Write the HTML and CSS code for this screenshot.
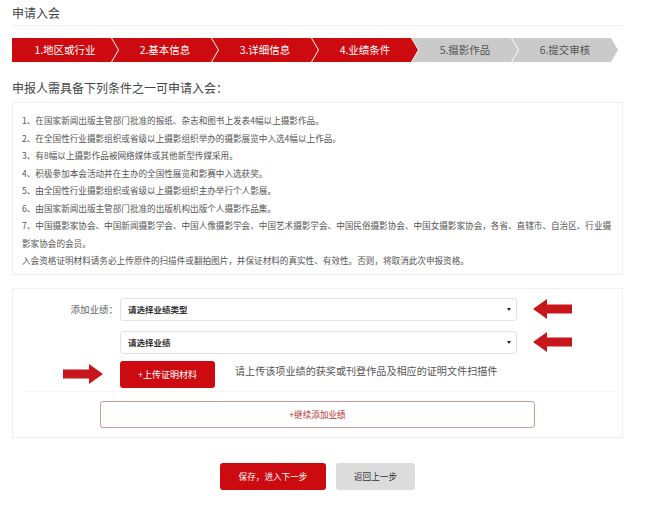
FILE: index.html
```html
<!DOCTYPE html>
<html lang="zh-CN">
<head>
  <meta charset="UTF-8">
  <meta name="viewport" content="width=device-width, initial-scale=1.0">
  <title>申请入会</title>
  <link rel="stylesheet" href="styles.css">
</head>
<body>
  <div class="page">
    <div class="page-title">申请入会</div>

    <!-- Step bar -->
    <div class="steps">
      <div class="step done">1.地区或行业</div>
      <div class="step done">2.基本信息</div>
      <div class="step done">3.详细信息</div>
      <div class="step done">4.业绩条件</div>
      <div class="step">5.摄影作品</div>
      <div class="step">6.提交审核</div>
    </div>

    <h2 class="cond-title">申报人需具备下列条件之一可申请入会：</h2>

    <!-- Conditions -->
    <div class="cond-box">
      <p>1、在国家新闻出版主管部门批准的报纸、杂志和图书上发表4幅以上摄影作品。</p>
      <p>2、在全国性行业摄影组织或省级以上摄影组织举办的摄影展览中入选4幅以上作品。</p>
      <p>3、有8幅以上摄影作品被网络媒体或其他新型传媒采用。</p>
      <p>4、积极参加本会活动并在主办的全国性展览和影赛中入选获奖。</p>
      <p>5、由全国性行业摄影组织或省级以上摄影组织主办举行个人影展。</p>
      <p>6、由国家新闻出版主管部门批准的出版机构出版个人摄影作品集。</p>
      <p>7、中国摄影家协会、中国新闻摄影学会、中国人像摄影学会、中国艺术摄影学会、中国民俗摄影协会、中国女摄影家协会，各省、直辖市、自治区、行业摄影家协会的会员。</p>
      <p>入会资格证明材料请务必上传原件的扫描件或翻拍图片，并保证材料的真实性、有效性。否则，将取消此次申报资格。</p>
    </div>

    <!-- Add achievement -->
    <div class="form-box">
      <div class="form-row">
        <div class="label">添加业绩：</div>
        <div class="select">请选择业绩类型<span class="caret"></span></div>
        <svg class="hint-arrow" width="39" height="20" viewBox="0 0 39 20">
          <polygon points="0,10 14,0 14,5.5 39,5.5 39,14.5 14,14.5 14,20" fill="#c8161d"/>
        </svg>
      </div>
      <div class="form-row">
        <div class="label"></div>
        <div class="select">请选择业绩<span class="caret"></span></div>
        <svg class="hint-arrow" width="39" height="20" viewBox="0 0 39 20">
          <polygon points="0,10 14,0 14,5.5 39,5.5 39,14.5 14,14.5 14,20" fill="#c8161d"/>
        </svg>
      </div>
      <div class="form-row upload-row">
        <div class="label">
          <svg width="40" height="20" viewBox="0 0 40 20">
            <polygon points="40,10 26,0 26,5.5 0,5.5 0,14.5 26,14.5 26,20" fill="#c8161d"/>
          </svg>
        </div>
        <button class="btn-upload">+上传证明材料</button>
        <span class="upload-hint">请上传该项业绩的获奖或刊登作品及相应的证明文件扫描件</span>
      </div>
      <button class="btn-more">+继续添加业绩</button>
    </div>

    <div class="actions">
      <button class="btn-next">保存，进入下一步</button>
      <button class="btn-back">返回上一步</button>
    </div>
  </div>
</body>
</html>
```

FILE: styles.css
```css
body {
  margin: 0;
  background: #fff;
  font-family: "Noto Sans CJK SC", "Noto Sans", sans-serif;
  color: #444;
}

.page {
  width: 611px;
  margin-left: 12px;
}

.page-title {
  font-size: 12px;
  line-height: 18px;
  padding: 4px 0 3px;
  color: #444;
  border-bottom: 1px solid #f0f0f0;
}

/* steps */
.steps {
  display: flex;
  margin-top: 12px;
  height: 24px;
}

.step {
  width: 106px;
  flex: none;
  margin-left: -6px;
  padding-left: 6px;
  box-sizing: border-box;
  background: #cacaca;
  color: #555;
  font-size: 10.5px;
  line-height: 24px;
  text-align: center;
  padding-right: 6px;
  clip-path: polygon(0 0, 99px 0, 106px 50%, 99px 100%, 0 100%, 7px 50%);
}

.step:first-child {
  margin-left: 0;
  clip-path: polygon(0 0, 99px 0, 106px 50%, 99px 100%, 0 100%);
}

.step.done {
  background: #cc0a0f;
  color: #fff;
}

.cond-title {
  margin: 16px 0 4px;
  font-size: 12px;
  font-weight: normal;
  line-height: 20px;
  color: #444;
}

.cond-box {
  border: 1px solid #efefef;
  padding: 9px 9px 4px;
}

.cond-box p {
  margin: 0;
  font-size: 8.6px;
  line-height: 17.5px;
  color: #555;
}

/* form */
.form-box {
  margin-top: 13px;
  border: 1px solid #efefef;
  padding: 9px 0 9px;
}

.form-row {
  display: flex;
  align-items: center;
  margin-bottom: 10px;
}

.label {
  width: 107px;
  flex: none;
  text-align: right;
  padding-right: 2px;
  box-sizing: border-box;
  font-size: 9.5px;
  color: #666;
}

.select {
  position: relative;
  width: 397px;
  height: 23px;
  box-sizing: border-box;
  border: 1px solid #e2e2e2;
  border-radius: 3px;
  padding-left: 7px;
  font-size: 8.5px;
  font-weight: bold;
  line-height: 21px;
  color: #333;
}

.caret {
  position: absolute;
  right: 5px;
  top: 9px;
  border-left: 2px solid transparent;
  border-right: 2px solid transparent;
  border-top: 3px solid #222;
}

.hint-arrow {
  margin-left: 16px;
}

.upload-row {
  margin-top: -3px;
  margin-bottom: 0;
  padding-bottom: 3px;
  border-bottom: 1px solid #f5f5f5;
  margin-left: 12px;
  margin-right: 8px;
}

.upload-row .label {
  width: 95px;
  display: flex;
  justify-content: flex-end;
  padding-right: 17px;
}

.btn-upload {
  width: 95px;
  height: 27px;
  border: none;
  border-radius: 3px;
  background: #cc0a0f;
  color: #fff;
  font-family: inherit;
  font-size: 9px;
  padding: 0;
}

.upload-hint {
  margin-left: 20px;
  margin-bottom: 8px;
  font-size: 10.1px;
  color: #555;
}

.btn-more {
  display: block;
  width: 435px;
  height: 27px;
  margin: 9px auto 0;
  background: #fff;
  border: 1px solid #c99a9a;
  border-radius: 3px;
  color: #b5302f;
  font-family: inherit;
  font-size: 8.6px;
  padding: 0;
}

.actions {
  display: flex;
  justify-content: center;
  gap: 10px;
  margin-top: 25px;
}

.actions button {
  height: 27px;
  border: none;
  border-radius: 3px;
  font-family: inherit;
  font-size: 8.6px;
  padding: 0;
}

.btn-next {
  width: 106px;
  background: #cc0a0f;
  color: #fff;
}

.btn-back {
  width: 79px;
  background: #dcdcdc;
  color: #333;
}
```
